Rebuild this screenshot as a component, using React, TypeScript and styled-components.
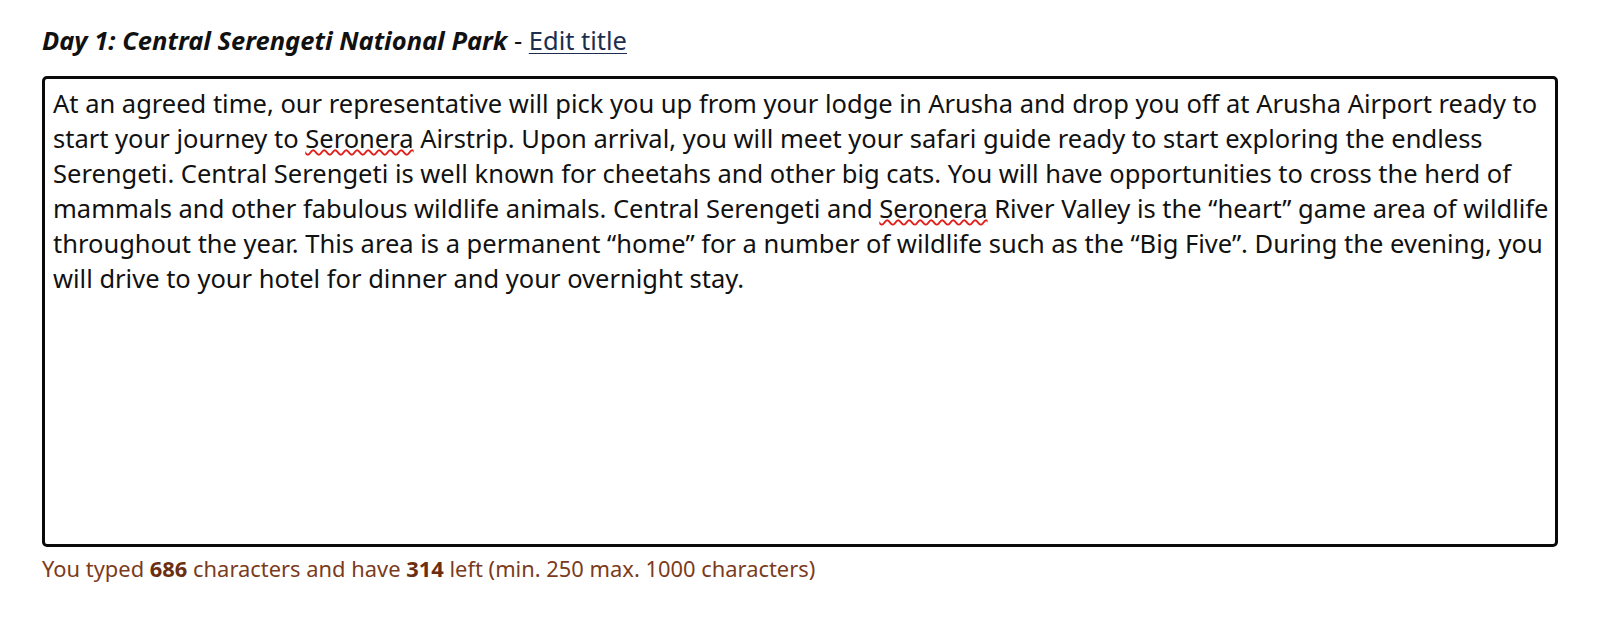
import React from "react";
import styled, { createGlobalStyle } from "styled-components";

const Global = createGlobalStyle`
  html, body { margin: 0; padding: 0; background: #fff; }
  body { font-family: "Noto Sans", "Open Sans", sans-serif; color: #111; }
`;

const Page = styled.div`
  padding: 22px 42px 0 42px;
  display: flex;
  flex-direction: column;
`;

const TitleRow = styled.div`
  font-size: 25.5px;
  line-height: 36px;
  margin-bottom: 18px;
`;

const DayTitle = styled.span`
  font-weight: 700;
  font-style: italic;
  color: #111;
`;

const EditLink = styled.a`
  color: #1c2e4f;
  text-decoration: underline;
  text-underline-offset: 3px;
  text-decoration-thickness: 1px;
  cursor: pointer;
`;

const Editor = styled.div`
  box-sizing: border-box;
  width: 1516px;
  height: 471px;
  border: 3px solid #0a0a0a;
  border-radius: 5px;
  padding: 7px 4px 5px 8px;
  font-size: 25.5px;
  line-height: 34.9px;
  color: #111;
  white-space: normal;
  outline: none;
`;

const Misspelled = styled.span`
  text-decoration: underline wavy #e0201a;
  text-decoration-thickness: 1.5px;
  text-underline-offset: 1px;
`;

const Counter = styled.div`
  margin-top: 7px;
  font-size: 21.9px;
  line-height: 29px;
  color: #7b3b1c;
`;

const Strong = styled.b`
  font-weight: 700;
  color: #6b2e10;
`;

export default function App() {
  return (
    <>
      <Global />
      <Page>
        <TitleRow>
          <DayTitle>Day 1: Central Serengeti National Park</DayTitle> -{" "}
          <EditLink>Edit title</EditLink>
        </TitleRow>
        <Editor role="textbox" aria-multiline="true">
          At an agreed time, our representative will pick you up from your lodge in Arusha and drop you off at Arusha Airport ready to start your journey to <Misspelled>Seronera</Misspelled> Airstrip. Upon arrival, you will meet your safari guide ready to start exploring the endless Serengeti. Central Serengeti is well known for cheetahs and other big cats. You will have opportunities to cross the herd of mammals and other fabulous wildlife animals. Central Serengeti and <Misspelled>Seronera</Misspelled> River Valley is the “heart” game area of wildlife throughout the year. This area is a permanent “home” for a number of wildlife such as the “Big Five”. During the evening, you will drive to your hotel for dinner and your overnight stay.
        </Editor>
        <Counter>
          You typed <Strong>686</Strong> characters and have <Strong>314</Strong> left (min. 250 max. 1000 characters)
        </Counter>
      </Page>
    </>
  );
}
